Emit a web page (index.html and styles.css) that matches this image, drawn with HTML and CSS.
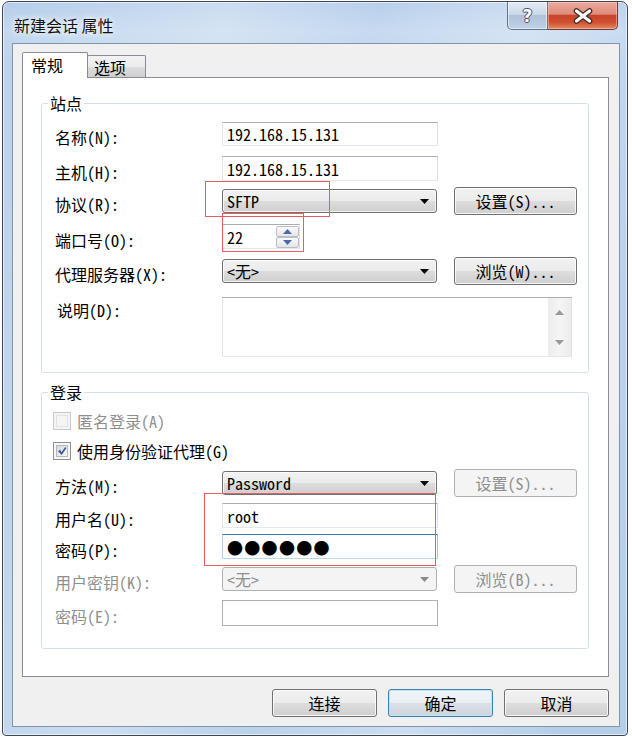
FILE: index.html
```html
<!DOCTYPE html>
<html lang="zh-CN">
<head>
<meta charset="utf-8">
<title>新建会话 属性</title>
<link rel="stylesheet" href="styles.css">
</head>
<body>
<div class="window">
  <div class="titlebar">
    <div class="title">新建会话 属性</div>
    <div class="caps">
      <div class="cap cap-help"><span class="q">?</span></div>
      <div class="cap cap-close">
        <svg width="22" height="16" viewBox="0 0 22 16"><path d="M4.5 3 L17.5 13 M17.5 3 L4.5 13" stroke="#3b2a28" stroke-width="5.6" stroke-linecap="round"/><path d="M4.5 3 L17.5 13 M17.5 3 L4.5 13" stroke="#ffffff" stroke-width="3.2" stroke-linecap="round"/></svg>
      </div>
    </div>
  </div>

  <div class="client">
    <div class="tabs">
      <div class="tab active">常规</div>
      <div class="tab idle">选项</div>
    </div>

    <div class="page">
      <section class="group site">
        <div class="gtitle">站点</div>

        <div class="row h24 first">
          <span class="lbl">名称(N):</span>
          <div class="field w216 h24">192.168.15.131</div>
        </div>

        <div class="row h25 g10">
          <span class="lbl">主机(H):</span>
          <div class="field w216 h25">192.168.15.131</div>
        </div>

        <div class="row h28 g6">
          <span class="lbl">协议(R):</span>
          <div class="combo"><span>SFTP</span><svg class="arrow" width="9" height="5" viewBox="0 0 9 5"><polygon points="0,0 9,0 4.5,5" fill="#000"/></svg></div>
          <div class="btn side">设置(S)...</div>
        </div>

        <div class="row h25 g9">
          <span class="lbl">端口号(O):</span>
          <div class="spin">
            <span>22</span>
            <div class="spin-btns">
              <div class="sb"><svg width="9" height="5" viewBox="0 0 9 5"><polygon points="0,5 4.5,0 9,5" fill="#4a69ad"/></svg></div>
              <div class="sb"><svg width="9" height="5" viewBox="0 0 9 5"><polygon points="0,0 9,0 4.5,5" fill="#4a69ad"/></svg></div>
            </div>
          </div>
        </div>

        <div class="row h28 g8">
          <span class="lbl">代理服务器(X):</span>
          <div class="combo"><span>&lt;无&gt;</span><svg class="arrow" width="9" height="5" viewBox="0 0 9 5"><polygon points="0,0 9,0 4.5,5" fill="#000"/></svg></div>
          <div class="btn side">浏览(W)...</div>
        </div>

        <div class="row memo-row g12">
          <span class="lbl lbl-memo">说明(D):</span>
          <div class="memo">
            <div class="vscroll">
              <svg width="9" height="5" viewBox="0 0 9 5"><polygon points="0,5 4.5,0 9,5" fill="#9a9a9a"/></svg>
              <svg width="9" height="5" viewBox="0 0 9 5"><polygon points="0,0 9,0 4.5,5" fill="#9a9a9a"/></svg>
            </div>
          </div>
        </div>
      </section>

      <section class="group login">
        <div class="gtitle">登录</div>

        <div class="row cb-row first-cb">
          <span class="cb disabled"><span class="cb-in"></span></span>
          <span class="dis">匿名登录(A)</span>
        </div>

        <div class="row cb-row g12">
          <span class="cb"><span class="cb-in"><svg width="14" height="14" viewBox="0 0 14 14"><path d="M1.5 7.2 L4.4 5.4 L6.3 8.6 L11.4 1.4 L13 3 L6.6 12.6 Z" fill="#3f5596"/></svg></span></span>
          <span>使用身份验证代理(G)</span>
        </div>

        <div class="row h28 g9">
          <span class="lbl">方法(M):</span>
          <div class="combo"><span>Password</span><svg class="arrow" width="9" height="5" viewBox="0 0 9 5"><polygon points="0,0 9,0 4.5,5" fill="#000"/></svg></div>
          <div class="btn side disabled">设置(S)...</div>
        </div>

        <div class="row h25 g6">
          <span class="lbl">用户名(U):</span>
          <div class="field w216 h25">root</div>
        </div>

        <div class="row h25 g6">
          <span class="lbl">密码(P):</span>
          <div class="field w216 h25 focus"><span class="dots">●●●●●●</span></div>
        </div>

        <div class="row h28 g6">
          <span class="lbl dis">用户密钥(K):</span>
          <div class="combo disabled"><span>&lt;无&gt;</span><svg class="arrow" width="9" height="5" viewBox="0 0 9 5"><polygon points="0,0 9,0 4.5,5" fill="#8a8a8a"/></svg></div>
          <div class="btn side disabled">浏览(B)...</div>
        </div>

        <div class="row h26 g7">
          <span class="lbl dis">密码(E):</span>
          <div class="field w216 h26 disabled-field"></div>
        </div>
      </section>

      <div class="mark mark-proto"></div>
      <div class="mark mark-port"></div>
      <div class="mark mark-cred"></div>
    </div>

    <div class="actions">
      <div class="btn act">连接</div>
      <div class="btn act default">确定</div>
      <div class="btn act">取消</div>
    </div>
  </div>
</div>
</body>
</html>
```

FILE: styles.css
```css
* { box-sizing: border-box; }

html, body {
  margin: 0;
  padding: 0;
  background: #ffffff;
}

body {
  width: 632px;
  height: 740px;
  overflow: hidden;
  font-family: "Noto Sans Mono CJK SC", "Liberation Mono", "Noto Sans CJK SC", monospace;
  font-size: 16px;
  line-height: 18px;
  color: #000;
}

/* ---------- window frame ---------- */
.window {
  margin: 1px 0 0 2px;
  width: 626px;
  height: 735px;
  border: 1px solid #3d4654;
  border-radius: 7px 7px 4px 4px;
  padding: 0 7px 8px 9px;
  display: flex;
  flex-direction: column;
  background:
    linear-gradient(100deg, rgba(255,255,255,0) 0%, rgba(255,255,255,.30) 30%, rgba(255,255,255,.05) 50%, rgba(255,255,255,.30) 70%, rgba(255,255,255,0) 90%),
    linear-gradient(#b4cdea 0px, #c3d8ef 30px, #bcd3ec 60px, #b6cfe9 100%);
  box-shadow: inset 0 0 0 1px rgba(255,255,255,.6);
}

.titlebar {
  height: 41px;
  display: flex;
  justify-content: space-between;
  align-items: flex-start;
  flex: none;
}

.title {
  padding: 13px 0 0 2px;
  font-family: "Noto Sans CJK SC", sans-serif;
  font-size: 16px;
  line-height: 20px;
  color: #111;
  text-shadow: 0 0 8px #fff, 0 0 4px rgba(255,255,255,.9);
}

.caps {
  display: flex;
  margin-right: 2px;
}

.cap {
  height: 28px;
  display: flex;
  align-items: center;
  justify-content: center;
}

.cap-help {
  width: 41px;
  border: 1px solid #62748c;
  border-top: none;
  border-radius: 0 0 0 5px;
  background: linear-gradient(#e3ebf5 0%, #cad8e8 46%, #afc2d9 50%, #bfd1e5 100%);
  box-shadow: inset 0 0 0 1px rgba(255,255,255,.55);
}

.q {
  font-family: "DejaVu Sans", sans-serif;
  font-weight: bold;
  font-size: 17px;
  line-height: 18px;
  color: #fff;
  text-shadow: 1px 0 0 #44536a, -1px 0 0 #44536a, 0 1px 0 #44536a, 0 -1px 0 #44536a;
}

.cap-close {
  width: 70px;
  border: 1px solid #6e3b36;
  border-top: none;
  border-left: none;
  border-radius: 0 0 5px 0;
  background: linear-gradient(#eaa99c 0%, #df8c79 45%, #c8432c 50%, #d0502f 75%, #e48a62 100%);
  box-shadow: inset 0 0 0 1px rgba(255,220,210,.45);
}

/* ---------- client area ---------- */
.client {
  flex: 1;
  background: #f0f0f0;
  border: 1px solid #8294aa;
  padding: 8px 10px 0 9px;
  display: flex;
  flex-direction: column;
}

.tabs {
  display: flex;
  align-items: flex-end;
  height: 25px;
  flex: none;
}

.tab {
  border: 1px solid #898c95;
  border-bottom: none;
  border-radius: 2px 2px 0 0;
  display: flex;
  align-items: center;
}

.tab.active {
  width: 66px;
  height: 26px;
  margin-bottom: -1px;
  padding: 0 0 2px 8px;
  background: #fff;
  position: relative;
  z-index: 2;
}

.tab.idle {
  width: 59px;
  height: 22px;
  margin-left: -1px;
  padding: 1px 0 0 6px;
  background: linear-gradient(#f3f3f3, #ebebeb 50%, #dddddd 50%, #cfcfcf);
}

.page {
  position: relative;
  height: 600px;
  flex: none;
  border: 1px solid #898c95;
  background: #fff;
  padding: 25px 19px 0 18px;
}

/* ---------- group boxes ---------- */
.group {
  border: 1px solid #d5dfe5;
  border-radius: 3px;
  padding: 0 0 15px 13px;
}

.group.login {
  margin-top: 19px;
  padding-bottom: 22px;
}

.gtitle {
  width: max-content;
  margin: -9px 0 0 -7px;
  padding: 0 2px;
  line-height: 16px;
  height: 16px;
  background: #fff;
}

.row {
  display: flex;
  align-items: center;
}

.row.first { margin-top: 11px; }
.row.first-cb { margin-top: 12px; }
.row.g6 { margin-top: 6px; }
.row.g7 { margin-top: 7px; }
.row.g8 { margin-top: 8px; }
.row.g9 { margin-top: 9px; }
.row.g10 { margin-top: 10px; }
.row.g12 { margin-top: 12px; }

.row.h24 { height: 24px; }
.row.h25 { height: 25px; }
.row.h26 { height: 26px; }
.row.h28 { height: 28px; }
.row.cb-row { height: 18px; }

.row.memo-row {
  height: 60px;
  align-items: flex-start;
}

.lbl {
  width: 167px;
  flex: none;
  padding-top: 6px;
  white-space: nowrap;
}

.lbl-memo {
  padding: 4px 0 0 2px;
}

.dis { color: #8f8f8f; }

/* ---------- controls ---------- */
.field {
  background: #fff;
  border: 1px solid;
  border-color: #abadb3 #dbdfe6 #e3e9ef #e2e3ea;
  padding-left: 4px;
  display: flex;
  align-items: center;
  white-space: nowrap;
}

.field.w216 { width: 216px; }
.field.h24 { height: 24px; }
.field.h25 { height: 25px; }
.field.h26 { height: 26px; }

.field.focus {
  border-color: #3d7bad #a4c9e3 #b7d9ed #b5cfe7;
}

.field.disabled-field {
  border-color: #adb2b5;
  background: #fff;
}

.dots {
  font-family: "Noto Sans CJK SC", sans-serif;
  font-size: 16px;
  letter-spacing: 1.3px;
  line-height: 18px;
}

.combo {
  width: 215px;
  height: 24px;
  flex: none;
  border: 1px solid #707070;
  border-radius: 3px;
  background: linear-gradient(#f2f2f2, #ebebeb 50%, #dddddd 50%, #cfcfcf);
  box-shadow: inset 0 0 0 1px rgba(255,255,255,.75);
  padding: 0 7px 0 4px;
  display: flex;
  align-items: center;
  justify-content: space-between;
  white-space: nowrap;
}

.combo.disabled {
  border-color: #adb2b5;
  background: #f4f4f4;
  box-shadow: none;
  color: #8f8f8f;
}

.btn {
  border: 1px solid #707070;
  border-radius: 3px;
  background: linear-gradient(#f2f2f2, #ebebeb 50%, #dddddd 50%, #cfcfcf);
  box-shadow: inset 0 0 0 1px rgba(255,255,255,.8);
  display: flex;
  align-items: center;
  justify-content: center;
  white-space: nowrap;
}

.btn.side {
  width: 123px;
  height: 28px;
  margin-left: 17px;
  flex: none;
}

.btn.disabled {
  border-color: #adb2b5;
  background: #f4f4f4;
  box-shadow: none;
  color: #8f8f8f;
}

.spin {
  width: 78px;
  height: 25px;
  flex: none;
  background: #fff;
  border: 1px solid;
  border-color: #abadb3 #dbdfe6 #e3e9ef #e2e3ea;
  padding: 1px 0 0 4px;
  display: flex;
  justify-content: space-between;
  align-items: stretch;
}

.spin > span {
  align-self: center;
  padding-bottom: 1px;
}

.spin-btns {
  width: 23px;
  display: flex;
  flex-direction: column;
}

.sb {
  flex: 1;
  border: 1px solid #b9bfc8;
  border-radius: 2px;
  background: linear-gradient(#fafafa, #e6e6e6);
  display: flex;
  align-items: center;
  justify-content: center;
}

.memo {
  width: 350px;
  height: 60px;
  flex: none;
  background: #fff;
  border: 1px solid;
  border-color: #abadb3 #dbdfe6 #e3e9ef #e2e3ea;
  display: flex;
  justify-content: flex-end;
}

.vscroll {
  width: 23px;
  height: 100%;
  background: linear-gradient(to right, #ececec, #f5f5f5 50%, #ececec);
  display: flex;
  flex-direction: column;
  justify-content: space-between;
  align-items: center;
  padding: 12px 0 11px;
}

/* checkboxes */
.cb {
  width: 18px;
  height: 18px;
  flex: none;
  margin: 0 6px 0 -2px;
  border: 1px solid #8e8f8f;
  padding: 2px;
  background: #f6f6f6;
}

.cb-in {
  width: 100%;
  height: 100%;
  display: flex;
  align-items: center;
  justify-content: center;
  border: 1px solid #b3b8be;
  background: linear-gradient(135deg, #d2d6db, #f8f8f8);
  overflow: visible;
}

.cb.disabled {
  border-color: #c9c9c9;
  background: #f4f4f4;
}

.cb.disabled .cb-in {
  border-color: #e2e2e2;
  background: #f4f4f4;
}

/* annotation boxes */
.mark {
  position: absolute;
  border: 1px solid #ec5b5f;
  pointer-events: none;
}

.mark-proto { left: 182px; top: 103px; width: 125px; height: 36px; }
.mark-port  { left: 199px; top: 135px; width: 82px;  height: 39px; }
.mark-cred  { left: 181px; top: 415px; width: 232px; height: 73px; }

/* bottom buttons */
.actions {
  display: flex;
  justify-content: flex-end;
  gap: 11px;
  margin-top: 12px;
}

.btn.act {
  width: 105px;
  height: 28px;
}

.btn.default {
  border-color: #3c7fb1;
  box-shadow: inset 0 0 0 1px #bfe3f8;
  background: linear-gradient(#f1f5f8, #e9eef2 50%, #dbe1e6 50%, #cdd5dc);
}
```
